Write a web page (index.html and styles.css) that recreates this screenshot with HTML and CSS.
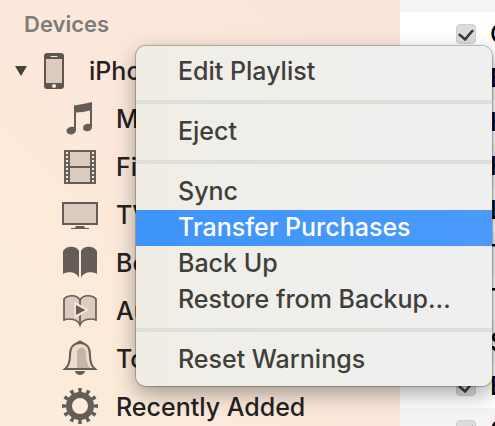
FILE: index.html
```html
<!DOCTYPE html>
<html lang="en">

<head>
    <meta charset="UTF-8">
    <meta name="viewport" content="width=device-width, initial-scale=1.0">
    <title>Devices</title>
    <link rel="stylesheet" href="styles.css">
</head>

<body>
    <div class="window">
        <nav class="sidebar">
            <h2>Devices</h2>
            <ul>
                <li class="device">
                    <svg class="arrow" viewBox="0 0 12 10"><path d="M0 0H12L6 10Z" fill="#45413d"/></svg>
                    <svg class="phone" viewBox="0 0 20 36">
                        <rect width="20" height="36" rx="3" fill="#5f574f"/>
                        <rect x="2" y="6" width="16" height="24" fill="#dccabe"/>
                        <path d="M7 3.500H13" stroke="#fae5da" stroke-linecap="round"/>
                        <circle cx="10" cy="33" r="2.100" fill="#fae5da"/>
                    </svg>
                    <a href="#iphone">iPhone</a>
                </li>
                <li>
                    <svg class="icon" viewBox="0 0 36 36">
                        <path d="M12 4.500Q20 3.500 30 1V26C30 31 21 32 21 27C21 23.500 25 22 28 23V9.500Q21 11.500 14 11.500V29C14 34.500 4.500 35 4.500 30C4.500 26.500 9 25 12 26Z" fill="#655d57"/>
                    </svg>
                    <a href="#music">Music</a>
                </li>
                <li>
                    <svg class="icon" viewBox="0 0 36 36">
                        <rect x="2" y="1" width="32" height="34" fill="#655d57"/>
                        <path d="M8 3H28V17H8ZM8 19H28V33H8Z" fill="#dccabe"/>
                        <path d="M5 3V34M31 3V34" stroke="#fce8dc" stroke-width="2" stroke-dasharray="2 2"/>
                    </svg>
                    <a href="#films">Films</a>
                </li>
                <li>
                    <svg class="icon" viewBox="0 0 36 36">
                        <rect x="1" y="6" width="34" height="21" fill="#dccabe" stroke="#655d57" stroke-width="2"/>
                        <path d="M14 29H22L23 31H27V32H9V31H13Z" fill="#655d57"/>
                    </svg>
                    <a href="#tv">TV</a>
                </li>
                <li>
                    <svg class="icon" viewBox="0 0 36 36">
                        <path d="M1 6C4 1 14 0 17 6V33C15 27 6 26 1 29ZM35 6C32 1 22 0 19 6V33C21 27 30 26 35 29Z" fill="#655d57"/>
                    </svg>
                    <a href="#books">Books</a>
                </li>
                <li>
                    <svg class="icon" viewBox="0 0 36 36">
                        <path d="M2 6C5 2 15 1 18 7C21 1 31 2 34 6V27C29 25 20 26 18 32C16 26 7 25 2 27Z" fill="#dccabe" stroke="#655d57" stroke-width="1.700"/>
                        <path d="M18 7V32" stroke="#655d57" stroke-width="1.700"/>
                        <path d="M12.500 8.500L27 17L12.500 25.500Z" fill="#fce8dc"/>
                        <path d="M14 12L23.500 17L14 22Z" fill="#655d57"/>
                    </svg>
                    <a href="#audiobooks">Audiobooks</a>
                </li>
                <li>
                    <svg class="icon" viewBox="0 0 36 36">
                        <path d="M14 2Q18-3 22 2ZM13 30H23Q22 34 18 34Q14 34 13 30Z" fill="#655d57"/>
                        <path d="M3 28C7 25 8 21 8 14C8 6 12 2 18 2C24 2 28 6 28 14C28 21 29 25 33 28Z" fill="#ecdbcf" stroke="#655d57" stroke-width="2"/>
                        <path d="M15 27V12C15 5 24 5 24 12C24 19 25 23 28 27Z" fill="#c4b5a9"/>
                    </svg>
                    <a href="#tones">Tones</a>
                </li>
                <li>
                    <svg class="icon" viewBox="0 0 36 36">
                        <g fill="none" stroke="#655d57">
                            <circle cx="18" cy="17" r="11" stroke-width="6"/>
                            <circle cx="18" cy="17" r="15.500" stroke-width="5" pathLength="12" stroke-dasharray=".42 .58" stroke-dashoffset=".21"/>
                        </g>
                    </svg>
                    <a href="#recent">Recently Added</a>
                </li>
            </ul>
        </nav>

        <main class="songs">
            <label><input type="checkbox" checked>C</label>
            <label><input type="checkbox" checked>E</label>
            <label><input type="checkbox" checked>H</label>
            <label><input type="checkbox" checked>H</label>
            <label><input type="checkbox" checked>L</label>
            <label><input type="checkbox" checked>T</label>
            <label><input type="checkbox" checked>T</label>
            <label><input type="checkbox" checked>S</label>
            <label><input type="checkbox" checked>E</label>
            <label><input type="checkbox" checked>C</label>
        </main>
    </div>

    <div class="menu">
        <button>Edit Playlist</button>
        <hr>
        <button>Eject</button>
        <hr>
        <button>Sync</button>
        <button class="selected">Transfer Purchases</button>
        <button>Back Up</button>
        <button>Restore from Backup…</button>
        <hr>
        <button>Reset Warnings</button>
    </div>
</body>

</html>
```
FILE: styles.css
```css
* {
    box-sizing: border-box;
}

body {
    margin: 0;
    font-family: Inter, "Liberation Sans", sans-serif;
    font-size: 25px;
    font-weight: 500;
    color: #222;
    overflow: hidden;
}

.window {
    display: flex;
    height: 100vh;
    overflow: hidden;
}

.sidebar {
    flex: 0 0 400px;
    background: linear-gradient(to bottom left, #f9e5dc, #fce8db 45%, #fdecd9);
}

.sidebar h2 {
    margin: 0;
    padding: 2px 0 0 24px;
    font-size: 22px;
    font-weight: 600;
    line-height: 45px;
    color: #7d7c7b;
}

.sidebar ul {
    margin: 0;
    padding: 0;
    list-style: none;
}

.sidebar li {
    display: flex;
    align-items: center;
    gap: 18px;
    height: 48px;
    padding-left: 62px;
}

.sidebar .device {
    padding-left: 15px;
    gap: 17px;
}

.sidebar a {
    color: inherit;
    text-decoration: none;
    white-space: nowrap;
}

.icon {
    width: 36px;
    height: 36px;
    overflow: visible;
}

.arrow {
    width: 12px;
    height: 10px;
}

.phone {
    width: 20px;
    height: 36px;
    margin-right: 8px;
}

.songs {
    flex: 1;
    padding-top: 12px;
    background-color: #f4f4f4;
    overflow: hidden;
}

.songs label {
    display: flex;
    align-items: center;
    gap: 14px;
    height: 44px;
    padding-left: 56px;
    color: #000;
}

.songs label:nth-child(odd) {
    background-color: #fff;
}

.songs input {
    flex: none;
    display: grid;
    place-items: center;
    width: 20px;
    height: 20px;
    margin: 0;
    appearance: none;
    border: 1px solid #cfcfcf;
    border-radius: 4px;
    background-color: #dcdcdd;
}

.songs input:checked::before {
    content: "";
    width: 7px;
    height: 11px;
    margin-bottom: 2px;
    border: solid #3c3c3c;
    border-width: 0 3px 3px 0;
    border-radius: 1px;
    transform: rotate(40deg);
}

.menu {
    position: absolute;
    top: 46px;
    left: 136px;
    right: 3px;
    padding: 8px 0;
    border-radius: 10px;
    background: linear-gradient(to right, #f0ede5, #efefea 40%, #efefef 75%);
    box-shadow: 0 0 1px 1px rgba(0, 0, 0, 0.25), 0 8px 22px rgba(0, 0, 0, 0.35);
}

.menu button {
    display: block;
    width: 100%;
    height: 36px;
    padding: 0 0 2px 42px;
    border: none;
    background: none;
    font: inherit;
    line-height: 34px;
    color: #3f3e3a;
    text-align: left;
    white-space: nowrap;
}

.menu .selected {
    background: linear-gradient(to right, #3f94fb, #4a9afc);
    color: #fff;
}

.menu hr {
    height: 4px;
    margin: 10px 0;
    border: none;
    background-color: #dededb;
}
```
